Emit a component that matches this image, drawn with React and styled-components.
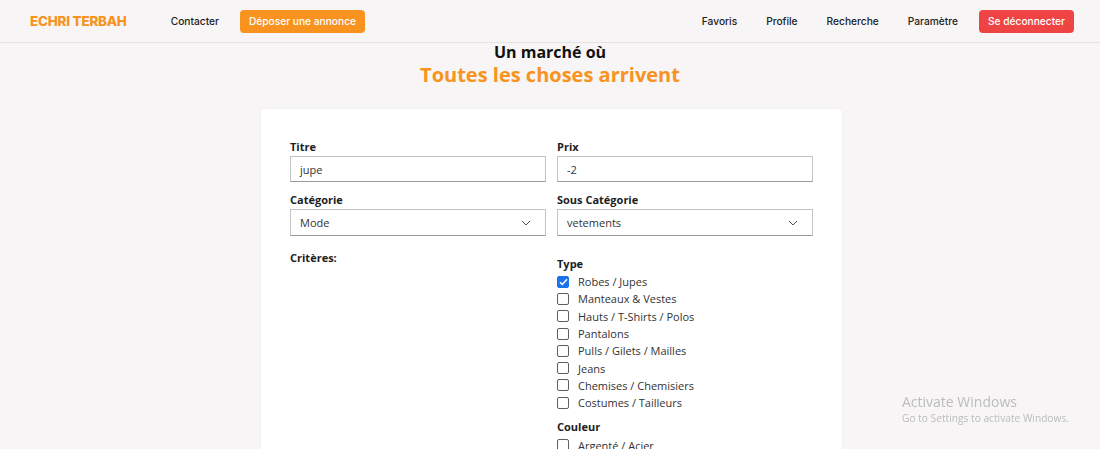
import React from "react";
import styled, { createGlobalStyle } from "styled-components";

const Global = createGlobalStyle`
  html, body { margin: 0; padding: 0; overflow: hidden; }
  body { background: #f7f5f5; font-family: "Open Sans", "Noto Sans", sans-serif; color: #1f1f1f; }
  * { box-sizing: border-box; }
`;

const Header = styled.header`
  height: 43px;
  display: flex;
  align-items: center;
  justify-content: space-between;
  padding: 0 26px 0 30px;
  border-bottom: 1px solid #e4e2e2;
  background: #f7f5f5;
  font-family: Inter, "Noto Sans", sans-serif;
`;

const Group = styled.nav`
  display: flex;
  align-items: center;
  gap: ${(p) => p.$gap || 0}px;
`;

const Logo = styled.div`
  color: #f7931e;
  font-weight: 800;
  font-size: 13.4px;
  letter-spacing: -0.2px;
  margin-right: 44px;
`;

const NavLink = styled.a`
  font-size: 10.2px;
  color: #222;
  text-decoration: none;
  font-weight: 500;
`;

const NavButton = styled.button`
  border: none;
  border-radius: 4px;
  height: 23px;
  padding: 0 9px;
  font-family: inherit;
  font-size: 10.2px;
  font-weight: 500;
  color: #fff;
  background: ${(p) => p.$bg};
  margin-left: ${(p) => p.$ml || 0}px;
`;

const Hero = styled.div`
  text-align: center;
  margin-bottom: 21px;
`;

const HeroTop = styled.h2`
  margin: 0;
  font-size: 16px;
  font-weight: 700;
  line-height: 18px;
  color: #111;
`;

const HeroBottom = styled.h1`
  margin: 0;
  font-size: 20px;
  font-weight: 700;
  line-height: 27px;
  color: #f7931e;
`;

const Card = styled.div`
  width: 581px;
  margin: 0 0 0 261px;
  background: #fff;
  border-radius: 4px;
  box-shadow: 0 0 3px rgba(0, 0, 0, 0.05);
  padding: 31px 29px 40px;
  min-height: 500px;
`;

const Row = styled.div`
  display: grid;
  grid-template-columns: 1fr 1fr;
  column-gap: 11px;
  margin-bottom: ${(p) => p.$mb || 0}px;
`;

const Field = styled.div`
  display: flex;
  flex-direction: column;
`;

const Label = styled.label`
  font-size: 11px;
  font-weight: 700;
  line-height: 14px;
  color: #1d1d1d;
  margin-bottom: 2px;
  margin-top: ${(p) => p.$mt || 0}px;
`;

const Input = styled.div`
  height: ${(p) => p.$h || 26}px;
  border: 1px solid #c4c4c4;
  border-bottom-color: #9a9a9a;
  display: flex;
  align-items: center;
  justify-content: space-between;
  padding: 0 14px 0 9px;
  font-size: 11px;
  color: #333;
`;

const Criteria = styled.div`
  font-size: 11px;
  font-weight: 700;
  line-height: 14px;
  color: #1d1d1d;
`;

const Options = styled.div`
  display: flex;
  flex-direction: column;
`;

const Option = styled.div`
  display: flex;
  align-items: center;
  height: 17.3px;
  font-size: 11px;
  color: #333;
`;

const Box = styled.span`
  width: 12px;
  height: 12px;
  border-radius: 2px;
  margin-right: 9px;
  display: inline-flex;
  align-items: center;
  justify-content: center;
  border: 1px solid ${(p) => (p.$checked ? "#1a73e8" : "#5f5f5f")};
  background: ${(p) => (p.$checked ? "#1a73e8" : "#fff")};
`;

const Watermark = styled.div`
  position: fixed;
  left: 902px;
  top: 393px;
  font-family: "Open Sans", "Noto Sans", sans-serif;
  color: #bcbcbc;
  pointer-events: none;
`;

const WTitle = styled.div`
  font-size: 14px;
  line-height: 18px;
`;

const WSub = styled.div`
  font-size: 10.2px;
  line-height: 14px;
`;

const Chevron = () => (
  <svg width="10" height="6" viewBox="0 0 10 6" fill="none">
    <path d="M1 1l4 4 4-4" stroke="#555" strokeWidth="1" />
  </svg>
);

const Check = () => (
  <svg width="9" height="8" viewBox="0 0 9 8" fill="none">
    <path d="M1 4.2l2.3 2.3L8 1.3" stroke="#fff" strokeWidth="1.5" />
  </svg>
);

const types = [
  ["Robes / Jupes", true],
  ["Manteaux & Vestes"],
  ["Hauts / T-Shirts / Polos"],
  ["Pantalons"],
  ["Pulls / Gilets / Mailles"],
  ["Jeans"],
  ["Chemises / Chemisiers"],
  ["Costumes / Tailleurs"],
];

const colors = ["Argenté / Acier", "Beige", "Blanc"];

export default function App() {
  return (
    <>
      <Global />
      <Header>
        <Group>
          <Logo>ECHRI TERBAH</Logo>
          <NavLink>Contacter</NavLink>
          <NavButton $bg="#f7931e" $ml={21}>Déposer une annonce</NavButton>
        </Group>
        <Group $gap={29}>
          <NavLink>Favoris</NavLink>
          <NavLink>Profile</NavLink>
          <NavLink>Recherche</NavLink>
          <NavLink>Paramètre</NavLink>
          <NavButton $bg="#ef4444" $ml={-8}>Se déconnecter</NavButton>
        </Group>
      </Header>
      <Hero>
        <HeroTop>Un marché où</HeroTop>
        <HeroBottom>Toutes les choses arrivent</HeroBottom>
      </Hero>
      <Card>
        <Row $mb={11}>
          <Field>
            <Label>Titre</Label>
            <Input>jupe</Input>
          </Field>
          <Field>
            <Label>Prix</Label>
            <Input>-2</Input>
          </Field>
        </Row>
        <Row $mb={15}>
          <Field>
            <Label>Catégorie</Label>
            <Input $h={27}>Mode<Chevron /></Input>
          </Field>
          <Field>
            <Label>Sous Catégorie</Label>
            <Input $h={27}>vetements<Chevron /></Input>
          </Field>
        </Row>
        <Row>
          <Criteria>Critères:</Criteria>
          <Field>
            <Label $mt={6}>Type</Label>
            <Options>
              {types.map(([t, c]) => (
                <Option key={t}>
                  <Box $checked={c}>{c && <Check />}</Box>
                  {t}
                </Option>
              ))}
            </Options>
            <Label $mt={9}>Couleur</Label>
            <Options>
              {colors.map((t) => (
                <Option key={t}>
                  <Box />
                  {t}
                </Option>
              ))}
            </Options>
          </Field>
        </Row>
      </Card>
      <Watermark>
        <WTitle>Activate Windows</WTitle>
        <WSub>Go to Settings to activate Windows.</WSub>
      </Watermark>
    </>
  );
}
